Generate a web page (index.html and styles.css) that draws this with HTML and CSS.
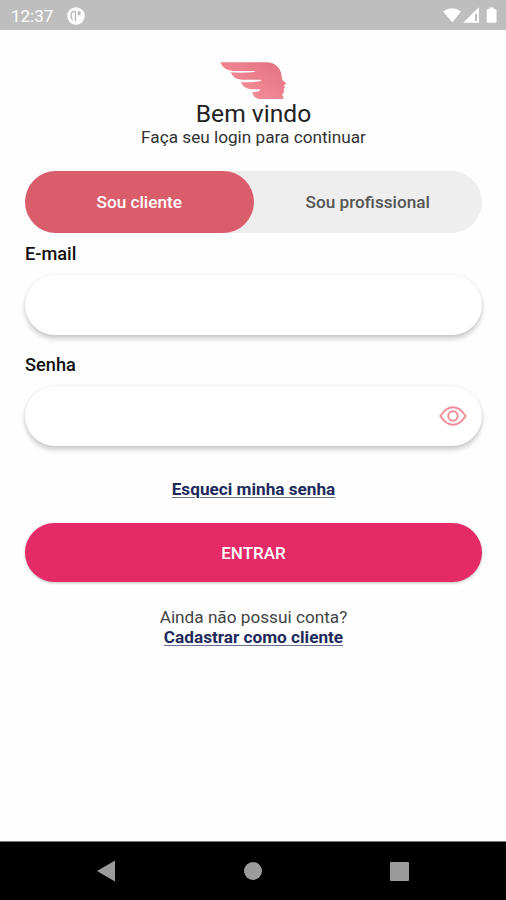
FILE: index.html
```html
<!DOCTYPE html>
<html lang="pt-BR">
<head>
    <meta charset="UTF-8">
    <meta name="viewport" content="width=device-width, initial-scale=1.0">
    <title>Login</title>
    <link rel="stylesheet" href="styles.css">
</head>
<body>
    <div class="status-bar">
        <span class="clock">12:37</span>
        <svg class="app-icon" width="18" height="18" viewBox="0 0 18 18">
            <circle cx="9" cy="9" r="8.7" fill="#fff"/>
            <path d="M8.5 4.5H6.8Q4.3 4.5 4.3 7v3q0 2 1.4 2.9M8.5 4.5v9.8" fill="none" stroke="#bebebe" stroke-width="1.5"/>
            <rect x="10.7" y="4.3" width="3" height="4" rx="1" fill="#bebebe"/>
        </svg>
        <svg class="signals" width="56" height="18" viewBox="0 0 56 18">
            <path d="M1 4.5Q10 -2 19 4.5L10.3 15.2z" fill="#fff"/>
            <path d="M21 15.8L37 .3V15.8z" fill="#fff"/>
            <path d="M33 7h2v7h-2z" fill="#bebebe"/>
            <path d="M47.5 .5h4v1.6h1.8q1.2 0 1.2 1.2v11.3q0 1.2-1.2 1.2h-7.4q-1.2 0-1.2-1.2V3.3q0-1.2 1.2-1.2h1.6z" fill="#fff"/>
        </svg>
    </div>

    <main class="login">
        <svg class="logo" width="67" height="38" viewBox="60 35 201 114">
            <defs>
                <linearGradient id="pink" x1="0" y1="1" x2="1" y2="0">
                    <stop offset="0" stop-color="#f9959f"/>
                    <stop offset="1" stop-color="#e2717f"/>
                </linearGradient>
            </defs>
            <path d="M61 36H199C226 36 243 53 245 78L247 90L259 99L252 105L255 112L251 117L252 126Q251 131 246 132L250 140V146H177Q160 144 157 125Q170 125 178 122L180 117H153Q129 114 123 95Q150 97 184 92L182 88H125Q100 87 92 66Q125 69 165 65V62H102Q70 61 61 36Z" fill="url(#pink)"/>
        </svg>
        <h1 class="title">Bem vindo</h1>
        <p class="subtitle">Faça seu login para continuar</p>

        <div class="tabs">
            <button class="tab active">Sou cliente</button>
            <button class="tab">Sou profissional</button>
        </div>

        <form class="form">
            <label class="label" for="email">E-mail</label>
            <div class="field">
                <input type="text" id="email">
            </div>
            <label class="label" for="password">Senha</label>
            <div class="field">
                <input type="password" id="password">
                <svg class="eye" width="28" height="20" viewBox="0 0 28 20" fill="none" stroke="#ee8f99" stroke-width="2">
                    <path d="M1.4 10Q7 1.2 14 1.2T26.6 10Q21 18.8 14 18.8T1.4 10z"/>
                    <circle cx="14" cy="10" r="4.7"/>
                </svg>
            </div>
            <a class="link forgot" href="#">Esqueci minha senha</a>
            <button class="submit" type="button">ENTRAR</button>
        </form>

        <p class="question">Ainda não possui conta?</p>
        <a class="link signup" href="#">Cadastrar como cliente</a>
    </main>

    <div class="nav-bar">
        <svg width="18" height="22" viewBox="0 0 18 22"><path d="M0 11L18 .5v21z" fill="#9b9b9b"/></svg>
        <svg width="18" height="18" viewBox="0 0 18 18"><circle cx="9" cy="9" r="9" fill="#9b9b9b"/></svg>
        <svg width="19" height="19" viewBox="0 0 19 19"><rect width="19" height="19" rx="1" fill="#9b9b9b"/></svg>
    </div>
</body>
</html>
```
FILE: styles.css
```css
* {
    box-sizing: border-box;
}
body {
    display: flex;
    flex-direction: column;
    height: 900px;
    margin: 0;
    font-family: Roboto, sans-serif;
    font-size: 17px;
    color: #222;
    background-color: #fefefe;
    overflow: hidden;
}
.status-bar {
    display: flex;
    align-items: center;
    height: 30px;
    padding: 1px 8px 0 11px;
    color: #fff;
    background-color: #bebebe;
}
.clock {
    width: 56px;
    font-size: 17px;
}
.signals {
    margin-left: auto;
}
.login {
    display: flex;
    flex: 1;
    flex-direction: column;
    align-items: center;
    padding: 32px 24px 0 25px;
}
.logo {
    display: block;
}
.title {
    margin: 0;
    font-size: 24.6px;
    font-weight: 400;
    line-height: 28px;
}
.subtitle {
    margin: 0;
    font-size: 17.2px;
    line-height: 18px;
    color: #333;
}
.tabs {
    display: flex;
    width: 100%;
    height: 62px;
    margin-top: 25px;
    border-radius: 31px;
    background-color: #eee;
}
.tab {
    flex: 1;
    padding: 0;
    border: none;
    border-radius: 31px;
    font: 500 17.2px Roboto, sans-serif;
    color: #555;
    background: none;
}
.tab.active {
    color: #fff;
    background-color: #da5d6b;
}
.form {
    display: flex;
    flex-direction: column;
    width: 100%;
}
.label {
    height: 42px;
    font-size: 18.2px;
    font-weight: 500;
    line-height: 42px;
    color: #111;
}
.field {
    display: flex;
    align-items: center;
    height: 60px;
    margin-bottom: 9px;
    padding: 0 15px 0 24px;
    border-radius: 30px;
    background-color: #fff;
    box-shadow: 0 4px 5px rgba(0, 0, 0, 0.19), 0 0 3px rgba(0, 0, 0, 0.09);
}
.field input {
    flex: 1;
    border: none;
    outline: none;
    font-size: 17px;
    background: none;
}
.link {
    font-size: 17.2px;
    font-weight: 700;
    color: #1f2a5c;
    text-decoration: underline;
    text-decoration-color: #6a7194;
    text-decoration-thickness: 1px;
    text-underline-offset: 2px;
}
.forgot {
    align-self: center;
    margin-top: 24px;
    line-height: 20px;
}
.submit {
    height: 59px;
    margin-top: 24px;
    border: none;
    border-radius: 30px;
    font: 500 17px Roboto, sans-serif;
    color: #fff;
    background-color: #e42a67;
    box-shadow: 0 1px 3px rgba(0, 0, 0, 0.25);
}
.question {
    margin: 25px 0 0;
    font-size: 17.2px;
    line-height: 20px;
    color: #444;
}
.signup {
    line-height: 20px;
}
.nav-bar {
    display: flex;
    justify-content: space-between;
    align-items: center;
    height: 59px;
    padding: 0 97px;
    border-top: 1px solid #777;
    background-color: #000;
}
```
